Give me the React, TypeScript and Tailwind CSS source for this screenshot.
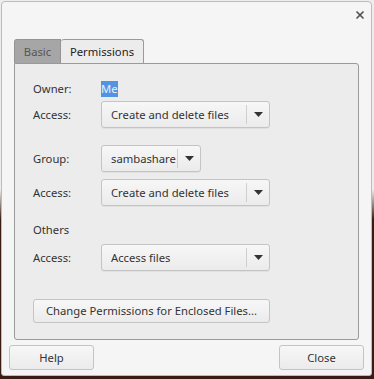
import { X } from 'lucide-react'

function Combo({ label, width }: { label: string; width: string }) {
  return (
    <div
      className={`flex h-[27px] ${width} items-center rounded-[3px] border border-[#c4c4c4] bg-gradient-to-b from-[#f7f7f7] to-[#ebebeb] shadow-[0_1px_0_rgba(0,0,0,0.05)]`}
    >
      <span className="flex-1 whitespace-nowrap pl-[9px] text-[#333]">{label}</span>
      <span className="h-[19px] w-px bg-[#cfcfcf]" />
      <span className="flex w-[22px] justify-center">
        <svg width="9" height="5" viewBox="0 0 9 5">
          <path d="M0 0h9L4.5 5z" fill="#333" />
        </svg>
      </span>
    </div>
  )
}

function Row({ label, children }: { label: string; children: React.ReactNode }) {
  return (
    <div className="flex items-center">
      <span className="w-[68px] text-[#333]">{label}</span>
      {children}
    </div>
  )
}

export default function App() {
  return (
    <div
      className="h-[379px] w-[374px] bg-[linear-gradient(to_bottom,#ededed_0%,#ededed_50%,#3a1c12_58%,#3a1c12_100%)] pl-px pt-px pr-[2px] pb-[3px]"
      style={{ fontFamily: '"Noto Sans", "Open Sans", sans-serif' }}
    >
      <div className="flex h-full flex-col rounded-t-[4px] rounded-b-[3px] border border-[#bcbcbc] bg-[#f5f5f5] text-[11.25px] leading-[16px]">
        {/* title bar */}
        <div className="flex h-[37px] items-start justify-end pr-[5px] pt-[7px]">
          <X className="h-[12px] w-[12px] text-[#555]" strokeWidth={3.5} />
        </div>

        {/* tabs */}
        <div className="flex pl-[12px]">
          <div className="flex h-[24px] w-[47px] items-center justify-center rounded-tl-[3px] border border-b-0 border-[#949494] bg-[#a6a6a6] text-[#555]">
            Basic
          </div>
          <div className="-mb-px flex h-[25px] w-[83px] items-center justify-center rounded-t-[3px] border border-b-0 border-l-0 border-[#9a9a9a] bg-[#ececec] text-[#222]">
            Permissions
          </div>
        </div>

        {/* page */}
        <div className="mx-[12px] flex h-[277px] flex-col rounded-b-[3px] rounded-tr-[3px] border border-[#9a9a9a] bg-[#ececec] pl-[18px] pt-[17px]">
          <Row label="Owner:">
            <span className="bg-[#5294e2] text-[#e8f1fc]">Me</span>
          </Row>
          <div className="mt-[4px]">
            <Row label="Access:">
              <Combo label="Create and delete files" width="w-[169px]" />
            </Row>
          </div>
          <div className="mt-[17px]">
            <Row label="Group:">
              <Combo label="sambashare" width="w-[100px]" />
            </Row>
          </div>
          <div className="mt-[7px]">
            <Row label="Access:">
              <Combo label="Create and delete files" width="w-[169px]" />
            </Row>
          </div>
          <div className="mt-[16px] text-[#333]">Others</div>
          <div className="mt-[6px]">
            <Row label="Access:">
              <Combo label="Access files" width="w-[169px]" />
            </Row>
          </div>
          <button className="mt-[28px] flex h-[24px] w-[237px] items-center justify-center rounded-[3px] border border-[#c4c4c4] bg-gradient-to-b from-[#f7f7f7] to-[#ebebeb] text-[#333]">
            Change Permissions for Enclosed Files...
          </button>
        </div>

        {/* buttons */}
        <div className="mt-[5px] flex justify-between px-[7px]">
          <button className="h-[25px] w-[85px] rounded-[3px] border border-[#c4c4c4] bg-gradient-to-b from-[#f7f7f7] to-[#ebebeb] text-[#333]">
            Help
          </button>
          <button className="h-[25px] w-[85px] rounded-[3px] border border-[#c4c4c4] bg-gradient-to-b from-[#f7f7f7] to-[#ebebeb] text-[#333]">
            Close
          </button>
        </div>
      </div>
    </div>
  )
}
